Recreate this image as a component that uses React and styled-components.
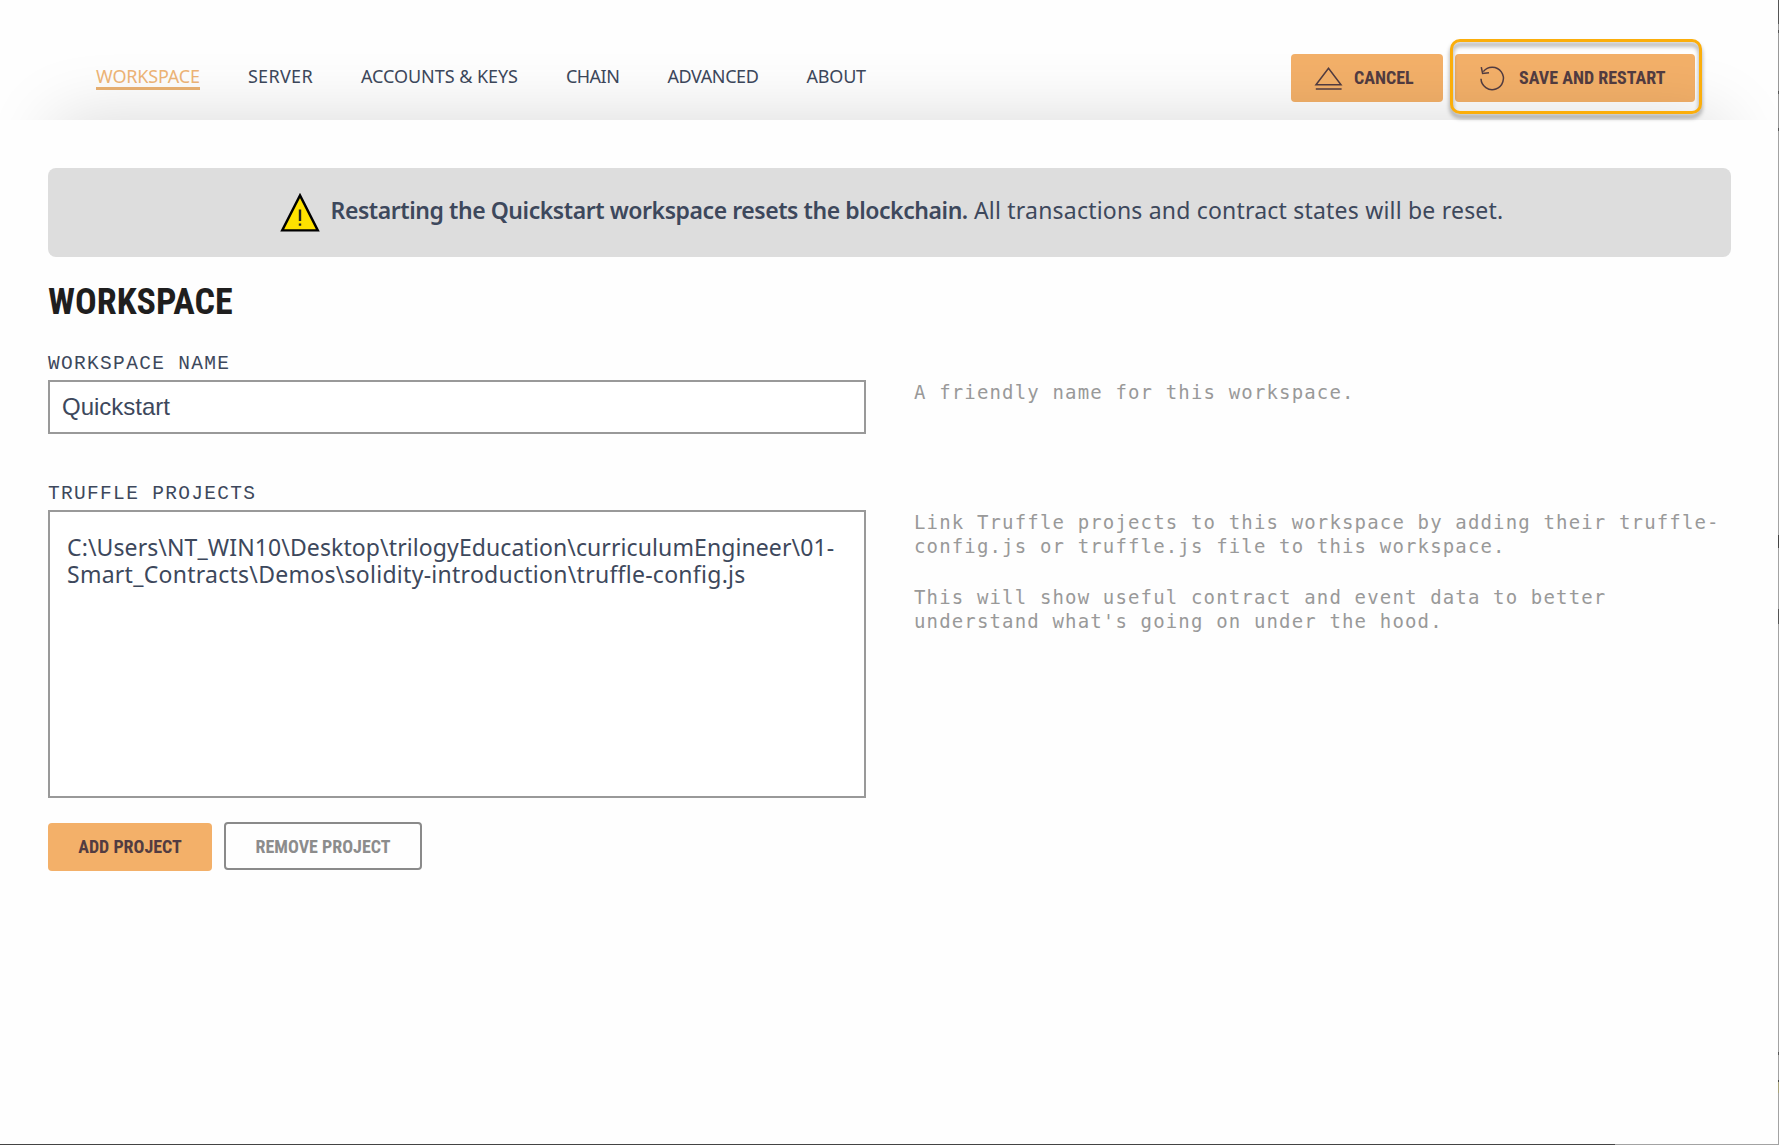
import React from 'react';
import styled, { createGlobalStyle } from 'styled-components';

const GlobalStyle = createGlobalStyle`
  * { box-sizing: border-box; }
  body { margin: 0; background: #fefefe; }
`;

const SANS = '"Noto Sans", "Open Sans", sans-serif';
const CONDENSED = '"Roboto Condensed", Roboto, sans-serif';
const MONO = '"DejaVu Sans Mono", monospace';

const Window = styled.div`
  height: 1145px;
  overflow: hidden;
  display: grid;
  grid-template-columns: 1fr 1px;
  grid-template-rows: 1fr 1px;
  color: #3d485c;
  font-family: ${SANS};
`;

const Screen = styled.div`
  background: #fefefe;
`;

const RightEdge = styled.div`
  background: linear-gradient(
    #555 0 24px, #999 24px 30px, #555 30px 33px, #999 33px 91px, #555 91px 94px,
    #999 94px 128px, #555 128px 131px, #a3a3a3 131px 535px, #444 535px 548px,
    #a3a3a3 548px 609px, #555 609px 624px, #a3a3a3 624px 1052px, #555 1052px 1055px,
    #a3a3a3 1055px 1080px, #444 1080px 1082px, #a8a37c 1082px 1093px, #a3a3a3 1093px
  );
`;

const BottomEdge = styled.div`
  grid-column: 1 / -1;
  background: linear-gradient(90deg, #444 0 1615px, #a3a3a3 1615px);
`;

const Header = styled.header`
  position: relative;
  height: 120px;
  padding: 54px 83px 0 96px;
  display: flex;
  justify-content: space-between;
  align-items: flex-start;
`;

const HeaderShade = styled.div`
  position: absolute;
  inset: 0;
  overflow: hidden;
  pointer-events: none;

  &::after {
    content: '';
    position: absolute;
    top: 100%;
    left: 55px;
    right: 55px;
    height: 100px;
    box-shadow: 0 0 70px rgba(0, 0, 0, 0.15);
  }
`;

const Nav = styled.nav`
  display: flex;
  gap: 48px;
  margin-top: 11px;
`;

const NavItem = styled.a`
  font-size: 18px;
  line-height: 22px;
  letter-spacing: ${(p) => p.$tracking}px;
  white-space: nowrap;
  color: ${(p) => (p.$active ? '#eeb577' : 'inherit')};
  border-bottom: 3px solid ${(p) => (p.$active ? '#eab273' : 'transparent')};
`;

const Actions = styled.div`
  display: flex;
  gap: 12px;
`;

const Button = styled.button`
  display: flex;
  align-items: center;
  justify-content: center;
  width: ${(p) => p.$width}px;
  height: 48px;
  padding: 0;
  border: 0;
  border-radius: 4px;
  background: #f3b069;
  color: #523c41;
  font: 700 18px/48px ${CONDENSED};
  white-space: nowrap;
`;

const IconButton = styled(Button)`
  justify-content: flex-start;
  gap: ${(p) => p.$gap}px;
  padding-left: 22px;
`;

const OutlineButton = styled(Button)`
  border: 2px solid #8a8a8a;
  background: transparent;
  color: #8c8c8c;
  padding-top: 2px;
`;

const HighlightAnchor = styled.div`
  position: relative;
`;

const Highlight = styled.div`
  position: absolute;
  z-index: 1;
  inset: -15px -7px -12px -5px;
  border: 3px solid #fbae0b;
  border-radius: 10px;
  filter: drop-shadow(0 4px 2px rgba(0, 0, 0, 0.4));
  pointer-events: none;
`;

const Main = styled.main`
  padding: 48px 47px 0 48px;
`;

const Banner = styled.div`
  display: flex;
  align-items: center;
  justify-content: center;
  gap: 11px;
  height: 89px;
  padding-left: 4px;
  border-radius: 8px;
  background: #ddd;
`;

const BannerText = styled.p`
  margin: 0 0 4px;
  font-size: 23px;
  line-height: 33px;
  letter-spacing: 0.2px;
  white-space: nowrap;

  strong {
    font-weight: 600;
    letter-spacing: -0.44px;
  }
`;

const Title = styled.h2`
  margin: 24px 0 29px;
  color: #1f1e1e;
  font: 700 36px/42px ${CONDENSED};
`;

const Field = styled.section`
  display: grid;
  grid-template-columns: 818px 1fr;
  column-gap: 48px;
  margin-bottom: 48px;
`;

const Label = styled.label`
  display: block;
  margin-bottom: 4px;
  font: 19.5px/24px "Liberation Mono", monospace;
  letter-spacing: 1.32px;
`;

const TextInput = styled.input`
  display: block;
  width: 100%;
  height: 54px;
  padding: 0 12px;
  border: 2px solid #999;
  border-radius: 0;
  background: #fff;
  color: inherit;
  font: 24px "Liberation Sans", Arial, sans-serif;
`;

const ProjectList = styled.div`
  height: 288px;
  padding: 22px 17px;
  border: 2px solid #999;
  background: #fff;
  font-size: 23px;
  line-height: 27px;
  white-space: nowrap;
`;

const PathLine = styled.span`
  display: block;
  letter-spacing: ${(p) => p.$tracking}px;
`;

const ButtonRow = styled.div`
  display: flex;
  gap: 12px;
  margin-top: 24px;

  > :first-child {
    margin-top: 1px;
  }
`;

const Help = styled.div`
  padding-top: 28px;
  color: #999;
  font: 19px/24px ${MONO};
  letter-spacing: 1.15px;
  white-space: nowrap;

  p {
    margin: 0 0 27px;
  }
`;

const EjectIcon = () => (
  <svg width="30" height="24" viewBox="0 0 30 24" fill="none" stroke="currentColor">
    <path d="M3 18.8 15.5 2.2 28 18.8Z" strokeWidth="1.5" />
    <path d="M2.8 23h25.8" strokeWidth="1.5" />
  </svg>
);

const RestartIcon = () => (
  <svg width="30" height="28" viewBox="0 0 30 28" fill="none" stroke="currentColor" strokeWidth="1.5">
    <path d="M4 14.8A11.2 11.2 0 1 0 6.3 7.6" />
    <path d="M4.3 3.2 5.6 9.4 12 8.7" />
  </svg>
);

const WarningIcon = () => (
  <svg width="40" height="40" viewBox="0 0 40 40">
    <path d="M20 2.4 37.8 37.4H2.2Z" fill="#ffe200" stroke="#000" strokeWidth="2.4" />
    <path d="M20 16.5v11.5M20 30.4v2.4" stroke="#222" strokeWidth="2.4" />
  </svg>
);

const TABS = [
  { name: 'WORKSPACE', tracking: -0.16, active: true },
  { name: 'SERVER', tracking: 0.32 },
  { name: 'ACCOUNTS & KEYS', tracking: -0.05 },
  { name: 'CHAIN', tracking: -0.5 },
  { name: 'ADVANCED', tracking: -0.4 },
  { name: 'ABOUT', tracking: -0.2 },
];

export default function App() {
  return (
    <>
      <GlobalStyle />
      <Window>
        <Screen>
          <Header>
            <Nav>
              {TABS.map((tab) => (
                <NavItem key={tab.name} $active={tab.active} $tracking={tab.tracking}>
                  {tab.name}
                </NavItem>
              ))}
            </Nav>
            <Actions>
              <IconButton $width={152} $gap={11}>
                <EjectIcon />
                CANCEL
              </IconButton>
              <HighlightAnchor>
                <IconButton $width={240} $gap={12}>
                  <RestartIcon />
                  SAVE AND RESTART
                </IconButton>
                <Highlight />
              </HighlightAnchor>
            </Actions>
            <HeaderShade />
          </Header>
          <Main>
            <Banner>
              <WarningIcon />
              <BannerText>
                <strong>Restarting the Quickstart workspace resets the blockchain.</strong> All
                transactions and contract states will be reset.
              </BannerText>
            </Banner>
            <Title>WORKSPACE</Title>
            <Field>
              <div>
                <Label htmlFor="workspace-name">WORKSPACE NAME</Label>
                <TextInput id="workspace-name" defaultValue="Quickstart" />
              </div>
              <Help>
                <p>A friendly name for this workspace.</p>
              </Help>
            </Field>
            <Field>
              <div>
                <Label as="div">TRUFFLE PROJECTS</Label>
                <ProjectList>
                  <PathLine $tracking={0.1}>
                    {'C:\\Users\\NT_WIN10\\Desktop\\trilogyEducation\\curriculumEngineer\\01-'}
                  </PathLine>
                  <PathLine $tracking={0.27}>
                    {'Smart_Contracts\\Demos\\solidity-introduction\\truffle-config.js'}
                  </PathLine>
                </ProjectList>
                <ButtonRow>
                  <Button $width={164}>ADD PROJECT</Button>
                  <OutlineButton $width={198}>REMOVE PROJECT</OutlineButton>
                </ButtonRow>
              </div>
              <Help>
                <p>
                  Link Truffle projects to this workspace by adding their truffle-
                  <br />
                  config.js or truffle.js file to this workspace.
                </p>
                <p>
                  This will show useful contract and event data to better
                  <br />
                  understand what's going on under the hood.
                </p>
              </Help>
            </Field>
          </Main>
        </Screen>
        <RightEdge />
        <BottomEdge />
      </Window>
    </>
  );
}
